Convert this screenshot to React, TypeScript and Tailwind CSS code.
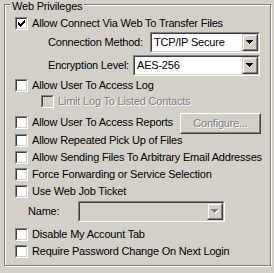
import React from "react";

const CHECK_COLS: [number, number][] = [
  [0, 2],
  [1, 3],
  [2, 4],
  [3, 3],
  [4, 2],
  [5, 1],
  [6, 0],
];

function Check({ checked = false, disabled = false }: { checked?: boolean; disabled?: boolean }) {
  return (
    <div className="w-[13px] h-[13px] shrink-0 border-t border-l border-t-[#808080] border-l-[#808080] border-b border-r border-b-white border-r-white">
      <div
        className={
          "w-full h-full border-t border-l border-t-[#404040] border-l-[#404040] border-b border-r border-b-[#d4d0c8] border-r-[#d4d0c8] " +
          (disabled ? "bg-[#d4d0c8]" : "bg-white")
        }
      >
        {checked && (
          <svg width="9" height="9" viewBox="0 0 9 9" shapeRendering="crispEdges" className="block">
            {CHECK_COLS.map(([c, r]) => (
              <rect key={c} x={c + 1} y={r + 1} width="1" height="3" fill="#000" />
            ))}
          </svg>
        )}
      </div>
    </div>
  );
}

function Arrow({ disabled = false }: { disabled?: boolean }) {
  const rows = [
    [0, 7],
    [1, 5],
    [2, 3],
    [3, 1],
  ];
  return (
    <svg width="8" height="5" viewBox="0 0 8 5" shapeRendering="crispEdges" className="block">
      {disabled &&
        rows.map(([r, w]) => (
          <rect key={"s" + r} x={(7 - w) / 2 + 1} y={r + 1} width={w} height="1" fill="#fff" />
        ))}
      {rows.map(([r, w]) => (
        <rect key={r} x={(7 - w) / 2} y={r} width={w} height="1" fill={disabled ? "#808080" : "#000"} />
      ))}
    </svg>
  );
}

function Combo({
  value,
  widthClass,
  disabled = false,
}: {
  value: string;
  widthClass: string;
  disabled?: boolean;
}) {
  return (
    <div
      className={
        widthClass +
        " h-[21px] shrink-0 border-t border-l border-t-[#808080] border-l-[#808080] border-b border-r border-b-white border-r-white"
      }
    >
      <div
        className={
          "w-full h-full flex items-center border-t border-l border-t-[#404040] border-l-[#404040] border-b border-r border-b-[#d4d0c8] border-r-[#d4d0c8] " +
          (disabled ? "bg-[#d4d0c8]" : "bg-white")
        }
      >
        <div className="flex-1 pl-[2px] leading-[13px] text-black">{value}</div>
        <div className="w-[16px] h-[17px] shrink-0 border-t border-l border-t-[#d4d0c8] border-l-[#d4d0c8] border-b border-r border-b-[#404040] border-r-[#404040]">
          <div className="w-full h-full flex items-center justify-center bg-[#d4d0c8] border-t border-l border-t-white border-l-white border-b border-r border-b-[#808080] border-r-[#808080]">
            <Arrow disabled={disabled} />
          </div>
        </div>
      </div>
    </div>
  );
}

const disabledText = "text-[#808080] [text-shadow:1px_1px_0_#fff]";

export default function App() {
  return (
    <div
      className="w-[274px] h-[273px] bg-[#d4d0c8] pt-[4px] pl-[4px] text-[11px] tracking-[-0.2px] text-black overflow-hidden"
      style={{ fontFamily: '"Liberation Sans", Arial, sans-serif' }}
    >
      <div className="relative w-[267px] h-[262px] border border-[#808080] shadow-[inset_1px_1px_0_#fff,1px_1px_0_#fff] flex flex-col pt-[12px]">
        <span className="absolute left-[5px] top-[-5px] px-[2px] bg-[#d4d0c8] leading-[13px]">Web Privileges</span>

        {/* R1 */}
        <div className="flex items-start h-[15px] pl-[10px]">
          <Check checked />
          <span className="ml-[4px] leading-[13px]">Allow Connect Via Web To Transfer Files</span>
        </div>

        {/* R2 */}
        <div className="flex items-start h-[23px] pl-[43px]">
          <div className="w-[102px] h-[21px] flex items-center leading-[13px]">Connection Method:</div>
          <Combo value="TCP/IP Secure" widthClass="w-[110px]" />
        </div>

        {/* R3 */}
        <div className="flex items-start h-[24px] pl-[43px]">
          <div className="w-[85px] h-[21px] flex items-center leading-[13px]">Encryption Level:</div>
          <Combo value="AES-256" widthClass="w-[127px]" />
        </div>

        {/* R4 */}
        <div className="flex items-start h-[16px] pl-[10px]">
          <Check />
          <span className="ml-[4px] leading-[13px]">Allow User To Access Log</span>
        </div>

        {/* R5 */}
        <div className="flex items-start h-[18px] pl-[36px]">
          <Check disabled />
          <span className={"ml-[4px] leading-[13px] " + disabledText}>Limit Log To Listed Contacts</span>
        </div>

        {/* R6 */}
        <div className="flex items-start h-[21px] pl-[10px]">
          <div className="mt-[3px] flex items-start">
            <Check />
            <span className="ml-[4px] leading-[13px]">Allow User To Access Reports</span>
          </div>
          <div className="ml-auto mr-[9px] w-[81px] h-[21px] border-t border-l border-t-white border-l-white border-b border-r border-b-[#404040] border-r-[#404040]">
            <div
              className={
                "w-full h-full flex items-center justify-center border-t border-l border-t-[#d4d0c8] border-l-[#d4d0c8] border-b border-r border-b-[#808080] border-r-[#808080] leading-[13px] " +
                disabledText
              }
            >
              Configure...
            </div>
          </div>
        </div>

        {/* R7 */}
        <div className="flex items-start h-[17px] pl-[10px]">
          <Check />
          <span className="ml-[4px] leading-[13px]">Allow Repeated Pick Up of Files</span>
        </div>

        {/* R8 */}
        <div className="flex items-start h-[17px] pl-[10px]">
          <Check />
          <span className="ml-[4px] leading-[13px] whitespace-nowrap">Allow Sending Files To Arbitrary Email Addresses</span>
        </div>

        {/* R9 */}
        <div className="flex items-start h-[17px] pl-[10px]">
          <Check />
          <span className="ml-[4px] leading-[13px]">Force Forwarding or Service Selection</span>
        </div>

        {/* R10 */}
        <div className="flex items-start h-[16px] pl-[10px]">
          <Check />
          <span className="ml-[4px] leading-[13px]">Use Web Job Ticket</span>
        </div>

        {/* R11 */}
        <div className="flex items-start h-[27px] pl-[23px]">
          <div className="w-[50px] h-[21px] flex items-center leading-[13px]">Name:</div>
          <Combo value="" widthClass="w-[147px]" disabled />
        </div>

        {/* R12 */}
        <div className="flex items-start h-[17px] pl-[10px]">
          <Check />
          <span className="ml-[4px] leading-[13px]">Disable My Account Tab</span>
        </div>

        {/* R13 */}
        <div className="flex items-start h-[13px] pl-[10px]">
          <Check />
          <span className="ml-[4px] leading-[13px]">Require Password Change On Next Login</span>
        </div>
      </div>
    </div>
  );
}
